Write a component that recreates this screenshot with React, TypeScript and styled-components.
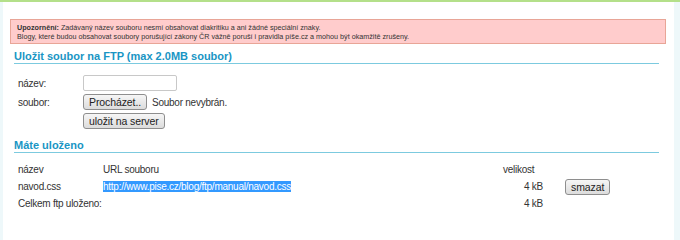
import styled, { createGlobalStyle } from 'styled-components';

const GlobalStyle = createGlobalStyle`
  html, body {
    margin: 0;
    padding: 0;
    background: #eef8fa;
  }
  body {
    border-top: 2px solid #b4e08a;
    font-family: "Liberation Sans", Arial, sans-serif;
    font-size: 10px;
    letter-spacing: -0.25px;
    color: #333;
  }
`;

const Panel = styled.div`
  margin: 0 6px 0 3px;
  background: #fff;
  padding: 17px 8px 0 7px;
  height: 238px;
  box-sizing: border-box;
`;

const Warning = styled.div`
  background: #ffcccc;
  border: 1px solid #e8a597;
  padding: 3px 6px 2px 6px;
  font-family: "Liberation Sans", Arial, sans-serif;
  font-size: 7.2px;
  letter-spacing: 0;
  line-height: 9px;
  color: #333;

  b {
    font-weight: bold;
  }
`;

const Heading = styled.h2<{ $top: number }>`
  margin: ${({ $top }) => $top}px 7px 0 4px;
  padding: 0;
  border-bottom: 1px solid #7ccadf;
  font-family: "Liberation Sans", Arial, sans-serif;
  font-size: 11px;
  letter-spacing: 0;
  font-weight: bold;
  color: #1995c4;
  line-height: 14px;
`;

const Form = styled.div`
  display: grid;
  grid-template-columns: 65px auto;
  align-items: center;
  row-gap: 3px;
  margin: 11px 0 0 8px;
`;

const Label = styled.span`
  color: #333;
`;

const Field = styled.div`
  display: flex;
  align-items: center;
  gap: 5px;
`;

const TextInput = styled.input`
  width: 88px;
  height: 12px;
  padding: 1px 2px;
  border: 1px solid #c8c8c8;
  border-radius: 2px;
`;

const Button = styled.button`
  font-family: "Liberation Sans", Arial, sans-serif;
  font-size: 10.5px;
  letter-spacing: -0.1px;
  color: #222;
  height: 16px;
  padding: 0 5px;
  border: 1px solid #8e8e8e;
  border-radius: 3px;
  background: linear-gradient(#f6f6f6, #dcdcdc);
  line-height: 14px;
`;

const Table = styled.div`
  display: grid;
  grid-template-columns: 85px 400px 40px 22px auto;
  grid-auto-rows: 17px;
  align-items: center;
  margin: 8px 0 0 8px;
`;

const Cell = styled.span<{ $right?: boolean }>`
  text-align: ${({ $right }) => ($right ? 'right' : 'left')};
  white-space: nowrap;
`;

const Selected = styled.span`
  background: #3399ff;
  color: #fff;
`;

export default function App() {
  return (
    <>
      <GlobalStyle />
      <Panel>
        <Warning>
          <b>Upozornění:</b> Zadávaný název souboru nesmí obsahovat diakritiku a ani žádné speciální znaky.
          <br />
          Blogy, které budou obsahovat soubory porušující zákony ČR vážně poruší i pravidla píše.cz a mohou být okamžitě zrušeny.
        </Warning>

        <Heading $top={5}>Uložit soubor na FTP (max 2.0MB soubor)</Heading>
        <Form>
          <Label>název:</Label>
          <Field>
            <TextInput type="text" />
          </Field>
          <Label>soubor:</Label>
          <Field>
            <Button>Procházet..</Button>
            <span>Soubor nevybrán.</span>
          </Field>
          <span />
          <Field>
            <Button>uložit na server</Button>
          </Field>
        </Form>

        <Heading $top={9}>Máte uloženo</Heading>
        <Table>
          <Cell>název</Cell>
          <Cell>URL souboru</Cell>
          <Cell>velikost</Cell>
          <span />
          <span />

          <Cell>navod.css</Cell>
          <Cell>
            <Selected>http://www.pise.cz/blog/ftp/manual/navod.css</Selected>
          </Cell>
          <Cell $right>4 kB</Cell>
          <span />
          <Field>
            <Button>smazat</Button>
          </Field>

          <Cell>Celkem ftp uloženo:</Cell>
          <span />
          <Cell $right>4 kB</Cell>
          <span />
          <span />
        </Table>
      </Panel>
    </>
  );
}
